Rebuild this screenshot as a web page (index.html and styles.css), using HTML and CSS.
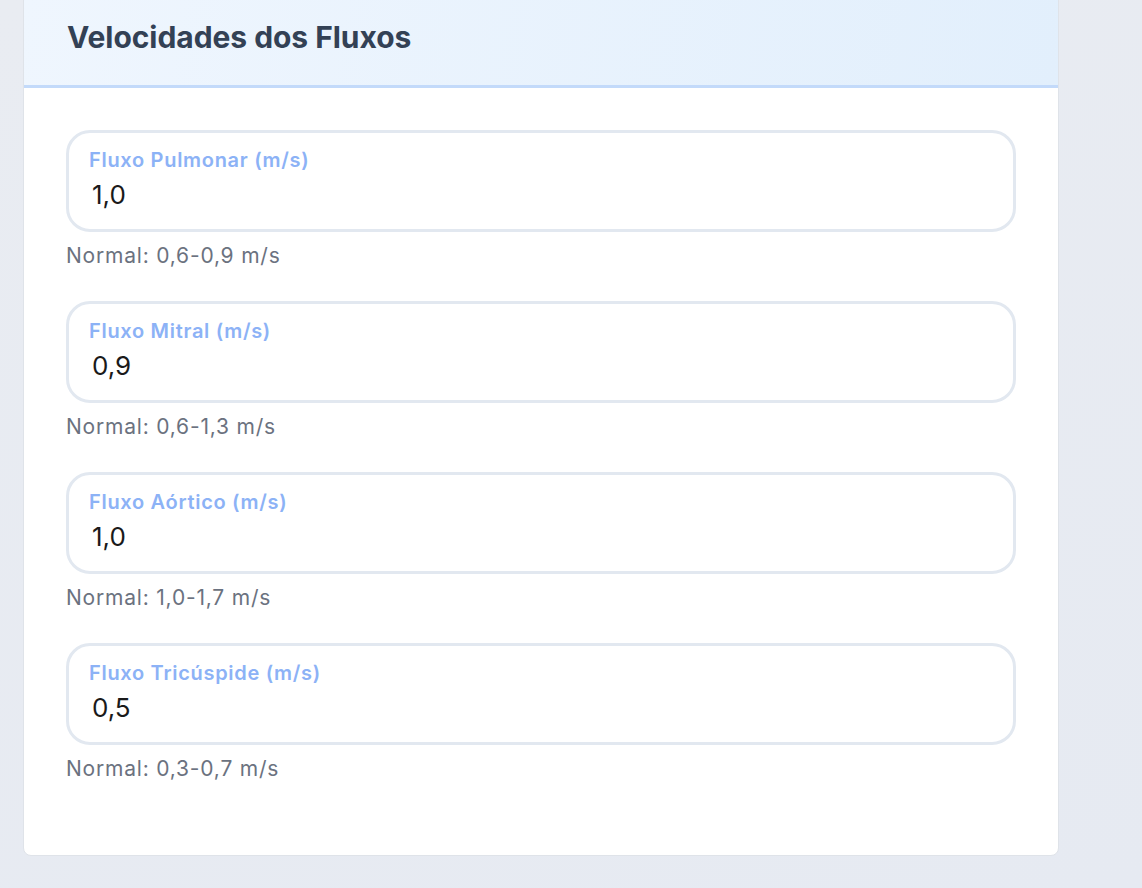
FILE: index.html
```html
<!DOCTYPE html>
<html lang="pt">
<head>
<meta charset="utf-8">
<link rel="stylesheet" href="styles.css">
</head>
<body>
<div class="page">
  <section class="card">
    <header class="card-header">
      <h2 class="card-title">Velocidades dos Fluxos</h2>
    </header>
    <div class="card-body">
      <div class="field">
        <label class="field-box">
          <span class="field-label">Fluxo Pulmonar (m/s)</span>
          <input class="field-input" type="text" value="1,0">
        </label>
        <p class="field-hint">Normal: 0,6-0,9 m/s</p>
      </div>
      <div class="field">
        <label class="field-box">
          <span class="field-label">Fluxo Mitral (m/s)</span>
          <input class="field-input" type="text" value="0,9">
        </label>
        <p class="field-hint">Normal: 0,6-1,3 m/s</p>
      </div>
      <div class="field">
        <label class="field-box">
          <span class="field-label">Fluxo Aórtico (m/s)</span>
          <input class="field-input" type="text" value="1,0">
        </label>
        <p class="field-hint">Normal: 1,0-1,7 m/s</p>
      </div>
      <div class="field">
        <label class="field-box">
          <span class="field-label">Fluxo Tricúspide (m/s)</span>
          <input class="field-input" type="text" value="0,5">
        </label>
        <p class="field-hint">Normal: 0,3-0,7 m/s</p>
      </div>
    </div>
  </section>
</div>
</body>
</html>
```

FILE: styles.css
```css
* { box-sizing: border-box; }
html, body { margin: 0; padding: 0; }
body {
  background: linear-gradient(160deg, #e9ecf2 0%, #e6eaf2 100%);
  font-family: Inter, "Noto Sans", sans-serif;
  height: 888px;
  overflow: hidden;
}
.page {
  padding: 0 83px 0 23px;
}
.card {
  margin-top: -12px;
  background: #ffffff;
  border: 1px solid #dfe3e9;
  border-radius: 8px;
  overflow: hidden;
  width: 1036px;
}
.card-header {
  height: 99px;
  padding: 0 0 0 43px;
  display: flex;
  align-items: center;
  background: linear-gradient(100deg, #eff6fe 0%, #e2effc 100%);
  border-bottom: 3px solid #c3dafa;
}
.card-title {
  margin: 0;
  font-size: 30px;
  font-weight: 700;
  color: #334155;
  letter-spacing: -0.05px;
}
.card-body {
  padding: 42px 42px 73px 42px;
  display: flex;
  flex-direction: column;
  gap: 32px;
}
.field-box {
  display: flex;
  flex-direction: column;
  height: 102px;
  border: 3px solid #e2e8f0;
  border-radius: 24px;
  padding: 15px 22px 0 20px;
}
.field-label {
  font-size: 20px;
  font-weight: 600;
  line-height: 24px;
  letter-spacing: 0.7px;
  color: #8cb2f6;
}
.field-input {
  border: none;
  outline: none;
  padding: 0 0 0 3px;
  margin-top: 6px;
  font-family: Inter, "Noto Sans", sans-serif;
  font-size: 26px;
  line-height: 34px;
  height: 34px;
  color: #1a1a1a;
  background: transparent;
}
.field-hint {
  margin: 11px 0 0 0;
  font-size: 21px;
  line-height: 26px;
  letter-spacing: 0.8px;
  color: #6b7280;
}
```
